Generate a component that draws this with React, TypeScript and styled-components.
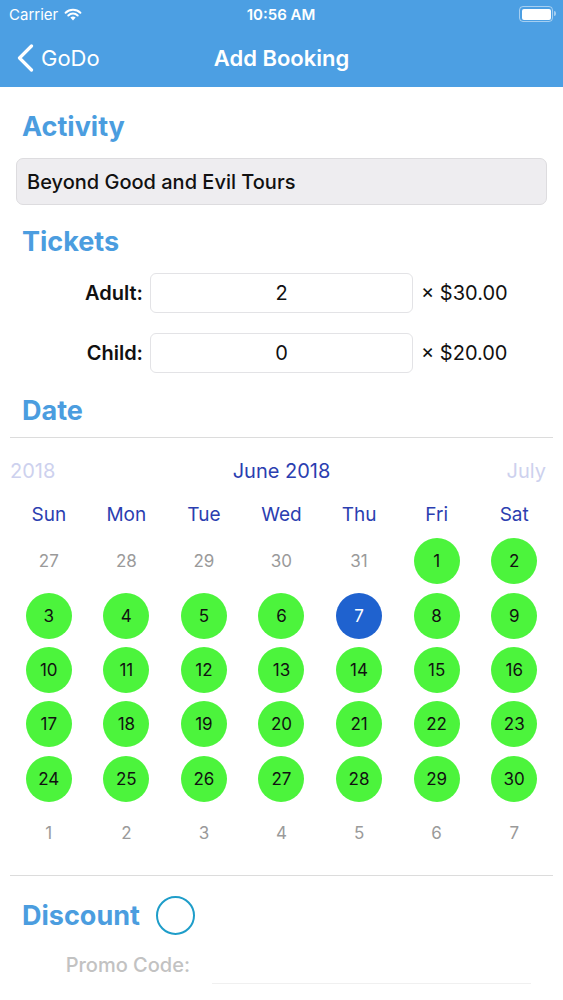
import React from "react";
import styled, { createGlobalStyle } from "styled-components";

const GlobalStyle = createGlobalStyle`
  html, body {
    margin: 0;
    padding: 0;
    background: #ffffff;
    font-family: Inter, "Noto Sans", "Liberation Sans", sans-serif;
  }
`;

const Screen = styled.div`
  width: 563px;
  height: 1000px;
  overflow: hidden;
  background: #fff;
`;

const Header = styled.header`
  background: #4c9fe3;
  height: 87px;
  color: #fff;
`;

const StatusBar = styled.div`
  height: 28px;
  display: grid;
  grid-template-columns: 1fr auto 1fr;
  align-items: center;
  padding: 0 10px 0 9px;
  font-size: 15px;
`;

const Carrier = styled.div`
  display: flex;
  align-items: center;
  gap: 6px;
  font-weight: 400;
`;

const Clock = styled.div`
  font-weight: 600;
`;

const Battery = styled.div`
  justify-self: end;
  width: 29px;
  height: 11px;
  border: 1.5px solid rgba(255, 255, 255, 0.5);
  border-radius: 4px;
  padding: 1.5px;
  position: relative;
  &::before {
    content: "";
    display: block;
    height: 100%;
    background: #fff;
    border-radius: 2px;
  }
  &::after {
    content: "";
    position: absolute;
    right: -4px;
    top: 4px;
    width: 2px;
    height: 5px;
    border-radius: 0 2px 2px 0;
    background: rgba(255, 255, 255, 0.5);
  }
`;

const NavBar = styled.div`
  height: 59px;
  display: grid;
  grid-template-columns: 1fr auto 1fr;
  align-items: center;
  padding: 0 17px;
`;

const Back = styled.div`
  display: flex;
  align-items: center;
  gap: 7px;
  font-size: 22px;
  font-weight: 400;
`;

const Title = styled.div`
  font-size: 22px;
  font-weight: 600;
`;

const Body = styled.main`
  padding: 0 10px;
`;

const SectionTitle = styled.h2<{ $top: number }>`
  margin: ${(p) => p.$top}px 0 0 12px;
  font-size: 27px;
  line-height: 32px;
  font-weight: 700;
  color: #4b9ddf;
  display: flex;
  align-items: center;
  gap: 16px;
`;

const ActivityField = styled.div`
  margin: 15px 6px 0 6px;
  height: 45px;
  background: #eeedf0;
  border: 1px solid #dddcdf;
  border-radius: 7px;
  display: flex;
  align-items: center;
  padding: 0 10px;
  font-size: 20px;
  font-weight: 500;
  color: #111;
`;

const TicketRows = styled.div`
  margin-top: 15px;
  display: flex;
  flex-direction: column;
  gap: 20px;
`;

const TicketRow = styled.div`
  display: grid;
  grid-template-columns: 133px 263px auto;
  column-gap: 7px;
  align-items: center;
`;

const TicketLabel = styled.div`
  text-align: right;
  font-size: 20px;
  font-weight: 600;
  color: #111;
`;

const NumberField = styled.div`
  height: 38px;
  border: 1px solid #e3e3e6;
  border-radius: 6px;
  display: flex;
  align-items: center;
  justify-content: center;
  font-size: 20px;
  color: #111;
`;

const Price = styled.div`
  font-size: 20px;
  color: #111;
  padding-left: 1px;
`;

const Divider = styled.hr<{ $top: number }>`
  margin: ${(p) => p.$top}px 0 0 0;
  border: none;
  border-top: 1px solid #dcdcdc;
`;

const Calendar = styled.div`
  padding: 0;
`;

const MonthBar = styled.div`
  height: 46px;
  padding-top: 10px;
  display: grid;
  grid-template-columns: 1fr auto 1fr;
  align-items: center;
  font-size: 20px;
`;

const SideMonth = styled.div<{ $right?: boolean }>`
  color: #cdd1ee;
  text-align: ${(p) => (p.$right ? "right" : "left")};
  padding: ${(p) => (p.$right ? "0 7px 0 0" : "0")};
`;

const MonthName = styled.div`
  color: #2b3eb0;
`;

const Grid = styled.div`
  display: grid;
  grid-template-columns: repeat(7, 1fr);
`;

const WeekDay = styled.div`
  height: 40px;
  display: flex;
  align-items: center;
  justify-content: center;
  font-size: 19px;
  color: #2b3eb0;
`;

const DayCell = styled.div`
  height: 54.4px;
  display: flex;
  align-items: center;
  justify-content: center;
`;

type DayKind = "out" | "free" | "selected";

const Day = styled.div<{ $kind: DayKind }>`
  width: 46px;
  height: 46px;
  border-radius: 50%;
  display: flex;
  align-items: center;
  justify-content: center;
  font-size: 17px;
  background: ${(p) =>
    p.$kind === "free" ? "#4cf43c" : p.$kind === "selected" ? "#1f62cf" : "transparent"};
  color: ${(p) =>
    p.$kind === "free" ? "#111" : p.$kind === "selected" ? "#fff" : "#9a9a9a"};
`;

const Toggle = styled.span`
  width: 35px;
  height: 35px;
  border-radius: 50%;
  border: 2px solid #1e9dc9;
  display: inline-block;
`;

const PromoRow = styled.div`
  margin-top: 10px;
  display: grid;
  grid-template-columns: 180px 1fr;
  column-gap: 22px;
  align-items: center;
`;

const PromoLabel = styled.div`
  text-align: right;
  font-size: 20px;
  font-weight: 500;
  color: #c2c2c2;
`;

const PromoField = styled.div`
  height: 38px;
  margin-right: 22px;
  border-bottom: 1px solid #f0f0f0;
`;

const WifiIcon = () => (
  <svg width="18" height="13" viewBox="0 0 18 13">
    <path d="M9 12.5 L6.4 9.6 A3.8 3.8 0 0 1 11.6 9.6 Z" fill="#fff" />
    <path d="M4.3 7.5 A6.8 6.8 0 0 1 13.7 7.5" stroke="#fff" strokeWidth="2" fill="none" strokeLinecap="round" />
    <path d="M1.6 4.7 A10.6 10.6 0 0 1 16.4 4.7" stroke="#fff" strokeWidth="2" fill="none" strokeLinecap="round" />
  </svg>
);

const Chevron = () => (
  <svg width="17" height="28" viewBox="0 0 17 28">
    <path d="M14.5 2 L2.5 14 L14.5 26" stroke="#fff" strokeWidth="3.2" fill="none" strokeLinecap="round" strokeLinejoin="round" />
  </svg>
);

const weekDays = ["Sun", "Mon", "Tue", "Wed", "Thu", "Fri", "Sat"];

const buildDays = () => {
  const days: { n: number; kind: DayKind }[] = [];
  [27, 28, 29, 30, 31].forEach((n) => days.push({ n, kind: "out" }));
  for (let n = 1; n <= 30; n++) days.push({ n, kind: n === 7 ? "selected" : "free" });
  for (let n = 1; n <= 7; n++) days.push({ n, kind: "out" });
  return days;
};

export default function App() {
  const days = buildDays();
  return (
    <Screen>
      <GlobalStyle />
      <Header>
        <StatusBar>
          <Carrier>
            Carrier <WifiIcon />
          </Carrier>
          <Clock>10:56 AM</Clock>
          <Battery />
        </StatusBar>
        <NavBar>
          <Back>
            <Chevron />
            GoDo
          </Back>
          <Title>Add Booking</Title>
          <div />
        </NavBar>
      </Header>
      <Body>
        <SectionTitle $top={24}>Activity</SectionTitle>
        <ActivityField>Beyond Good and Evil Tours</ActivityField>

        <SectionTitle $top={21}>Tickets</SectionTitle>
        <TicketRows>
          <TicketRow>
            <TicketLabel>Adult:</TicketLabel>
            <NumberField>2</NumberField>
            <Price>× $30.00</Price>
          </TicketRow>
          <TicketRow>
            <TicketLabel>Child:</TicketLabel>
            <NumberField>0</NumberField>
            <Price>× $20.00</Price>
          </TicketRow>
        </TicketRows>

        <SectionTitle $top={22}>Date</SectionTitle>
        <Divider $top={10} />
        <Calendar>
          <MonthBar>
            <SideMonth>2018</SideMonth>
            <MonthName>June 2018</MonthName>
            <SideMonth $right>July</SideMonth>
          </MonthBar>
          <Grid>
            {weekDays.map((d) => (
              <WeekDay key={d}>{d}</WeekDay>
            ))}
            {days.map((d, i) => (
              <DayCell key={i}>
                <Day $kind={d.kind}>{d.n}</Day>
              </DayCell>
            ))}
          </Grid>
        </Calendar>
        <Divider $top={15} />

        <SectionTitle $top={20}>
          Discount <Toggle />
        </SectionTitle>
        <PromoRow>
          <PromoLabel>Promo Code:</PromoLabel>
          <PromoField />
        </PromoRow>
      </Body>
    </Screen>
  );
}
